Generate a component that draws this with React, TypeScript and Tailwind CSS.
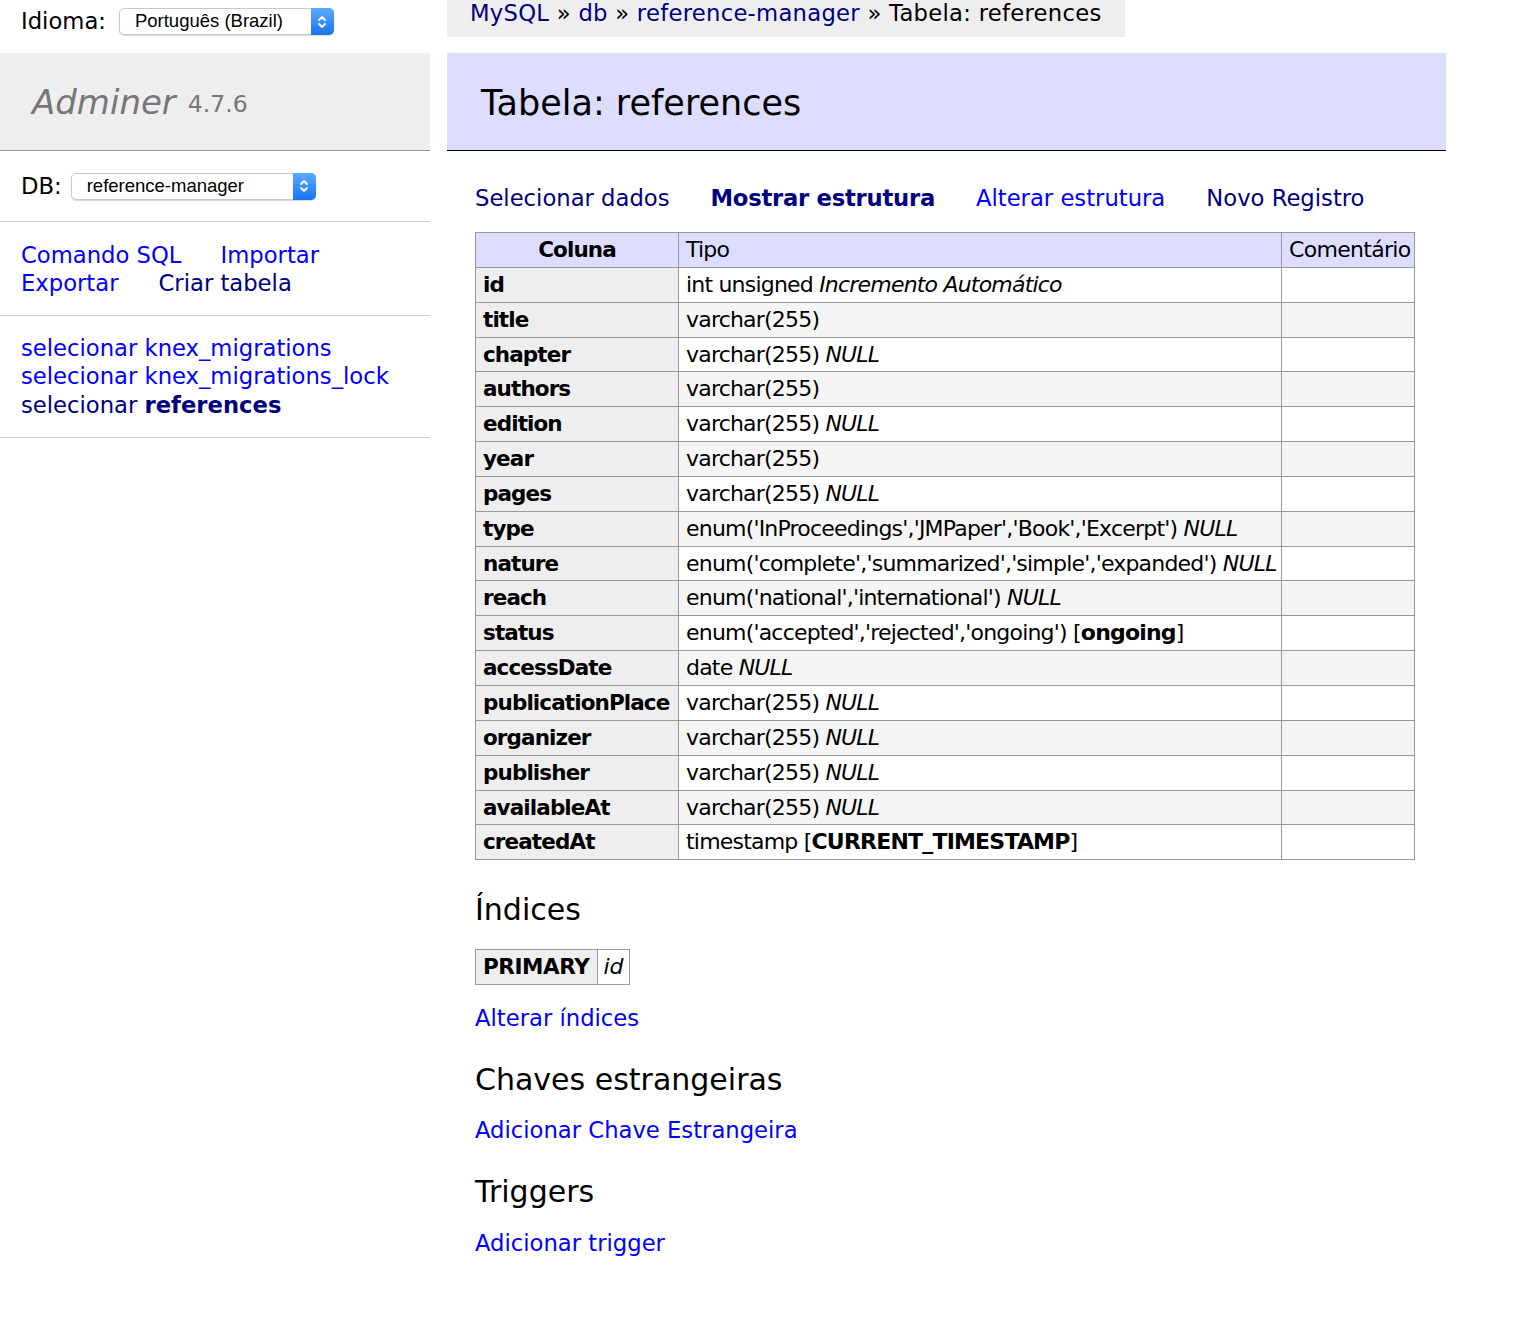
import clsx from 'clsx'

// ─── Data ─────────────────────────────────────────────────────────────────────

type Field = {
  name: string
  type: string
  nullable?: boolean
  def?: string
  extra?: string
}

const fields: Field[] = [
  { name: 'id', type: 'int unsigned', extra: 'Incremento Automático' },
  { name: 'title', type: 'varchar(255)' },
  { name: 'chapter', type: 'varchar(255)', nullable: true },
  { name: 'authors', type: 'varchar(255)' },
  { name: 'edition', type: 'varchar(255)', nullable: true },
  { name: 'year', type: 'varchar(255)' },
  { name: 'pages', type: 'varchar(255)', nullable: true },
  { name: 'type', type: "enum('InProceedings','JMPaper','Book','Excerpt')", nullable: true },
  { name: 'nature', type: "enum('complete','summarized','simple','expanded')", nullable: true },
  { name: 'reach', type: "enum('national','international')", nullable: true },
  { name: 'status', type: "enum('accepted','rejected','ongoing')", def: 'ongoing' },
  { name: 'accessDate', type: 'date', nullable: true },
  { name: 'publicationPlace', type: 'varchar(255)', nullable: true },
  { name: 'organizer', type: 'varchar(255)', nullable: true },
  { name: 'publisher', type: 'varchar(255)', nullable: true },
  { name: 'availableAt', type: 'varchar(255)', nullable: true },
  { name: 'createdAt', type: 'timestamp', def: 'CURRENT_TIMESTAMP' },
]

// ─── Fake macOS select ────────────────────────────────────────────────────────

function MacSelect({ value, className }: { value: string; className?: string }) {
  return (
    <div
      className={clsx(
        'flex h-[27px] items-stretch rounded-[5px] border border-[#c8c8c8] bg-white shadow-[0_1px_1px_rgba(0,0,0,0.15)]',
        className
      )}
    >
      <span className="flex flex-1 items-center pl-[15px] font-['Liberation_Sans',Arial,sans-serif] text-[18.5px] leading-none text-black">
        {value}
      </span>
      <span className="-my-px -mr-px flex w-[23px] items-center justify-center rounded-r-[5px] bg-gradient-to-b from-[#5aa9ff] to-[#1673f6]">
        <svg width="10" height="16" viewBox="0 0 10 16" fill="none" stroke="white" strokeWidth="1.8" strokeLinecap="round" strokeLinejoin="round">
          <path d="M2 6 L5 3 L8 6" />
          <path d="M2 10 L5 13 L8 10" />
        </svg>
      </span>
    </div>
  )
}

// ─── Sidebar ──────────────────────────────────────────────────────────────────

function Sidebar() {
  return (
    <aside className="w-[430px] shrink-0">
      <div className="flex h-[53px] items-start pl-[21px] pt-[8px]">
        <div className="flex h-[27px] items-center gap-[13px]">
          <span>Idioma:</span>
          <MacSelect value="Português (Brazil)" className="w-[215px]" />
        </div>
      </div>

      <div className="flex h-[98px] items-center border-b border-[#999] bg-[#eee] pl-[32px] text-[#777]">
        <span className="text-[34px] italic leading-none">Adminer</span>
        <span className="ml-[12px] mt-[6px] text-[23.5px] leading-none">4.7.6</span>
      </div>

      <div className="flex h-[71px] items-center gap-[9px] border-b border-[#ccc] pl-[21px]">
        <span>DB:</span>
        <MacSelect value="reference-manager" className="w-[245px]" />
      </div>

      <div className="flex h-[94px] flex-col justify-center border-b border-[#ccc] pl-[21px] leading-[28px]">
        <div className="flex gap-[39px]">
          <a className="text-[#00f]">Comando SQL</a>
          <a className="text-[#00f]">Importar</a>
        </div>
        <div className="flex gap-[40px]">
          <a className="text-[#00f]">Exportar</a>
          <a className="text-[#000080]">Criar tabela</a>
        </div>
      </div>

      <div className="flex h-[122px] flex-col justify-center border-b border-[#ccc] pl-[21px] leading-[28.5px]">
        <a className="text-[#00f]">selecionar knex_migrations</a>
        <a className="text-[#00f]">selecionar knex_migrations_lock</a>
        <a className="text-[#000080]">
          selecionar <b>references</b>
        </a>
      </div>
    </aside>
  )
}

// ─── Structure table ──────────────────────────────────────────────────────────

function FieldType({ f }: { f: Field }) {
  return (
    <>
      {f.type}
      {f.extra && (
        <>
          {' '}
          <i>{f.extra}</i>
        </>
      )}
      {f.nullable && (
        <>
          {' '}
          <i>NULL</i>
        </>
      )}
      {f.def && (
        <>
          {' '}[<b>{f.def}</b>]
        </>
      )}
    </>
  )
}

const cell = 'border border-[#999] px-[7px] py-[3px] leading-[27.85px] align-top'
const nameCell = 'bg-[#eee] text-left font-bold text-[21.5px] tracking-[-0.9px]'
const textCell = 'text-[22px] tracking-[-0.8px]'

function StructureTable() {
  return (
    <table className="w-[939px] table-fixed border-collapse">
      <colgroup>
        <col className="w-[203px]" />
        <col className="w-[603px]" />
        <col className="w-[133px]" />
      </colgroup>
      <thead>
        <tr className="bg-[#ddf]">
          <th className={clsx(cell, 'text-center font-bold text-[21.5px] tracking-[-0.9px]')}>Coluna</th>
          <td className={clsx(cell, textCell)}>Tipo</td>
          <td className={clsx(cell, 'text-[22px] tracking-[-0.7px]')}>Comentário</td>
        </tr>
      </thead>
      <tbody>
        {fields.map((f, i) => (
          <tr key={f.name} className={i % 2 === 1 ? 'bg-[#f5f5f5]' : 'bg-white'}>
            <th className={clsx(cell, nameCell)}>{f.name}</th>
            <td className={clsx(cell, textCell, 'whitespace-nowrap')}>
              <FieldType f={f} />
            </td>
            <td className={cell}></td>
          </tr>
        ))}
      </tbody>
    </table>
  )
}

// ─── App ──────────────────────────────────────────────────────────────────────

export default function App() {
  return (
    <div className="flex min-h-[1322px] bg-white font-['DejaVu_Sans',Verdana,sans-serif] text-[22.7px] leading-[27px] text-black">
      <Sidebar />

      <main className="ml-[17px] w-[999px]">
        <div className="w-fit bg-[#eee] px-[23px] pb-[10px] tracking-[0.27px]">
          <a className="text-[#000080]">MySQL</a> » <a className="text-[#000080]">db</a> »{' '}
          <a className="text-[#000080]">reference-manager</a> » Tabela: references
        </div>

        <h2 className="mt-[16px] flex h-[98px] items-center border-b border-black bg-[#ddf] pl-[34px] pt-[4px] text-[35px] font-normal">
          Tabela: references
        </h2>

        <div className="pl-[28px]">
          <p className="mt-[34px] flex gap-[41px]">
            <a className="text-[#000080]">Selecionar dados</a>
            <a className="font-bold tracking-[-0.25px] text-[#000080]">Mostrar estrutura</a>
            <a className="text-[#00f]">Alterar estrutura</a>
            <a className="text-[#000080]">Novo Registro</a>
          </p>

          <div className="mt-[20px]">
            <StructureTable />
          </div>

          <h3 className="mt-[32px] text-[30px] leading-[36px]">Índices</h3>
          <table className="mt-[21px] border-collapse">
            <tbody>
              <tr>
                <th className={clsx(cell, 'bg-[#eee] text-left text-[21.5px] font-bold tracking-[-0.4px]')}>PRIMARY</th>
                <td className={clsx(cell, 'pl-[6px] pr-[5px] text-[22px] italic')}>id</td>
              </tr>
            </tbody>
          </table>
          <p className="mt-[20px]">
            <a className="text-[#00f]">Alterar índices</a>
          </p>

          <h3 className="mt-[30px] text-[30px] leading-[36px]">Chaves estrangeiras</h3>
          <p className="mt-[19px]">
            <a className="text-[#00f]">Adicionar Chave Estrangeira</a>
          </p>

          <h3 className="mt-[30px] text-[30px] leading-[36px]">Triggers</h3>
          <p className="mt-[20px]">
            <a className="text-[#00f]">Adicionar trigger</a>
          </p>
        </div>
      </main>
    </div>
  )
}
